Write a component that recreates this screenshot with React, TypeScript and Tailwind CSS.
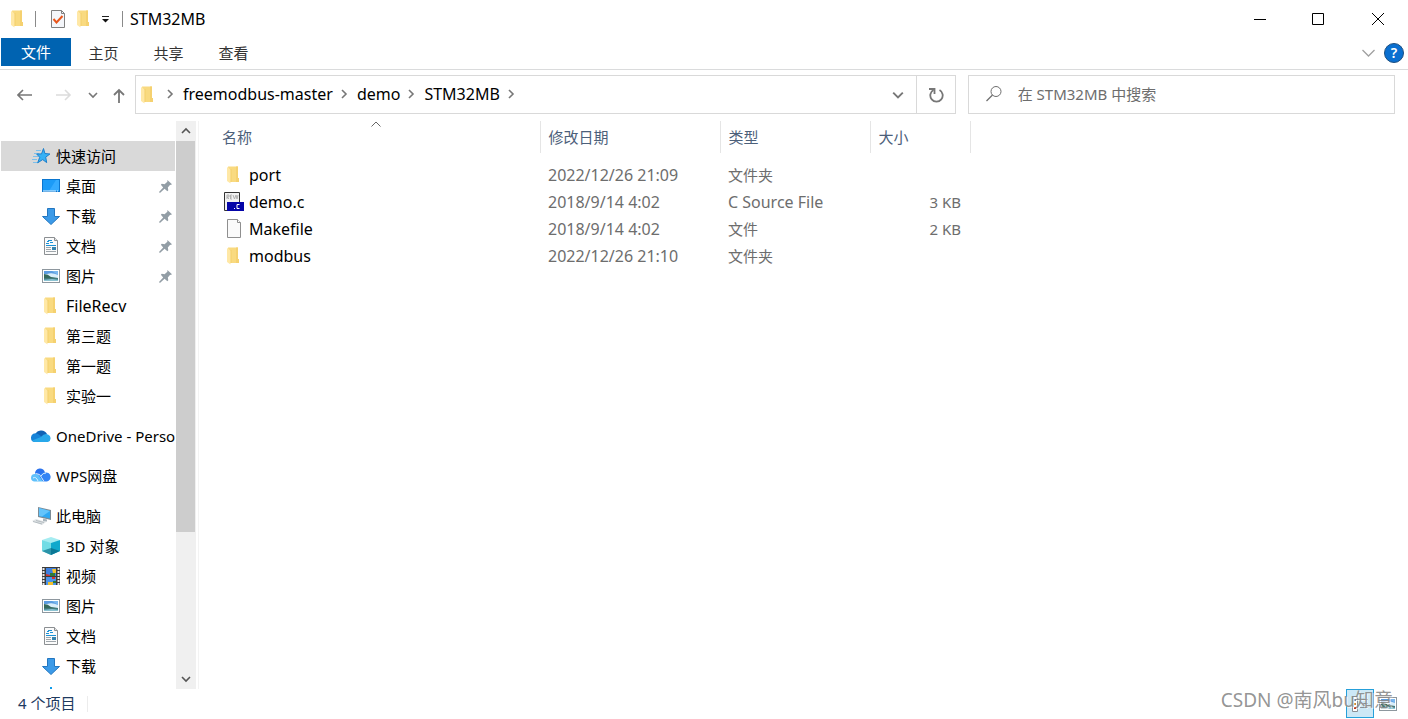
import React, { useState } from "react";

type IconName =
  | "star"
  | "desktop"
  | "download"
  | "document"
  | "picture"
  | "folder"
  | "onedrive"
  | "wps"
  | "pc"
  | "cube"
  | "video"
  | "music";

interface NavItem {
  label: string;
  icon: IconName;
  root?: boolean;
  pinned?: boolean;
}

interface FileItem {
  name: string;
  date: string;
  type: string;
  size?: string;
  icon: "folder" | "csource" | "blank";
}

const navGroups: NavItem[][] = [
  [
    { label: "快速访问", icon: "star", root: true },
    { label: "桌面", icon: "desktop", pinned: true },
    { label: "下载", icon: "download", pinned: true },
    { label: "文档", icon: "document", pinned: true },
    { label: "图片", icon: "picture", pinned: true },
    { label: "FileRecv", icon: "folder" },
    { label: "第三题", icon: "folder" },
    { label: "第一题", icon: "folder" },
    { label: "实验一", icon: "folder" },
  ],
  [{ label: "OneDrive - Personal", icon: "onedrive", root: true }],
  [{ label: "WPS网盘", icon: "wps", root: true }],
  [
    { label: "此电脑", icon: "pc", root: true },
    { label: "3D 对象", icon: "cube" },
    { label: "视频", icon: "video" },
    { label: "图片", icon: "picture" },
    { label: "文档", icon: "document" },
    { label: "下载", icon: "download" },
    { label: "", icon: "music" },
  ],
];

const files: FileItem[] = [
  { name: "port", date: "2022/12/26 21:09", type: "文件夹", icon: "folder" },
  { name: "demo.c", date: "2018/9/14 4:02", type: "C Source File", size: "3 KB", icon: "csource" },
  { name: "Makefile", date: "2018/9/14 4:02", type: "文件", size: "2 KB", icon: "blank" },
  { name: "modbus", date: "2022/12/26 21:10", type: "文件夹", icon: "folder" },
];

const crumbs = ["freemodbus-master", "demo", "STM32MB"];

// latin labels are set one step larger than chinese ones
const isLatin = (text: string) => /^[\x20-\x7e]+$/.test(text);

const FolderIcon = () => (
  <svg width="20" height="20" viewBox="0 0 20 20" aria-hidden="true">
    <path d="M4 1.500h10V13h1v4H6z" fill="#f9da80" />
    <path d="M12 1.500h2V13h1v4h-3z" fill="#f5d170" />
    <path d="M6 4h1.500v13H6z" fill="#f3cf6b" />
    <path d="M3 2l3.500 2.500v14L3 16z" fill="#ffe8a6" />
  </svg>
);

const PictureIcon = () => (
  <svg width="20" height="20" viewBox="0 0 20 20" aria-hidden="true">
    <rect x="1.500" y="3.500" width="17" height="13" fill="#fff" stroke="#8e979e" />
    <rect x="3" y="5" width="14" height="10" fill="#79b7ee" />
    <path d="M3 5h8l6 4v3H3z" fill="#5a9be0" />
    <path d="M6 8q5-2 11 1v3H3V8z" fill="#d8edfa" />
    <path d="M3 8q4 0 7 3l7 1v1H3z" fill="#35695c" />
    <path d="M3 12.500h14V15H3z" fill="#4e8b99" />
    <path d="M3 14l8-1 6 1v1H3z" fill="#8cc3d2" />
  </svg>
);

const NavIcon = ({ name }: { name: IconName }) => {
  if (name === "folder") return <FolderIcon />;
  if (name === "picture") return <PictureIcon />;
  return (
    <svg width="20" height="20" viewBox="0 0 20 20" aria-hidden="true">
      {name === "star" && (
        <>
          <path d="M5 4.500h5M3 7.500h5M2 10.500h5M1 13.500h5M2 16.500h5" stroke="#7cc0ec" />
          <path
            d="M12.500 2.500l1.400 5 5 .5-4.200 3.200 1 5.400-4-3-5 3.200 2-5.500-3-3.300 4.800-.1z"
            fill="#36b1f5"
            stroke="#1c7fcb"
          />
        </>
      )}
      {name === "desktop" && (
        <>
          <rect x="1.500" y="3.500" width="17" height="12" fill="#1c9bf7" stroke="#0b76cf" />
          <path d="M8 15L15 4h3v11z" fill="#35abff" />
          <path d="M2 15h13M16 15h1" stroke="#dff1ff" />
        </>
      )}
      {name === "download" && (
        <path d="M6.500 2.500h7v8h5L10 18.500 1.500 10.500h5z" fill="#3b9ae8" stroke="#2276c0" />
      )}
      {name === "document" && (
        <>
          <path d="M3.500 1.500h10l3 3v14h-13z" fill="#fbfbfb" stroke="#8b8f92" />
          <path d="M13.500 1.500v3h3" fill="#e4e4e4" stroke="#8b8f92" />
          <path d="M7 4.500h4M6 5.500h2M5 7.500h3M9 6.500h3M5 9.500h10" stroke="#1b92d6" />
          <path d="M5 11.500h5M5 13.500h5M5 15.500h10" stroke="#9fa6ab" />
          <rect x="11" y="11" width="4" height="3" fill="#3683ad" />
        </>
      )}
      {name === "onedrive" && (
        <>
          <path d="M4 9a6.500 6.500 0 0 1 12-1l-5 5z" fill="#0f62b5" />
          <path d="M0 12a4.500 4.500 0 0 1 7-4L14 13l-3 3H4a4 4 0 0 1-4-4z" fill="#1683d8" />
          <path d="M10 11q3-4 7-2.500a4 4 0 0 1 0 7.500H4a4 4 0 0 1-3-1.500z" fill="#28a8ea" />
        </>
      )}
      {name === "wps" && (
        <>
          <path d="M4 8a5 5 0 0 1 10-1l-2 4 2 4H9z" fill="#2a73ee" />
          <path d="M3 15.500a3.800 3.800 0 0 1 1-7.500q4 0 5 3l3 4.500z" fill="#60c1fb" />
          <path d="M8 9q3-3 6-2.500a4.600 4.600 0 0 1 2 9h-4z" fill="#3384f5" />
          <path d="M4.500 7.500q5 0 6 4l2.500 4M10 10q2-3.500 5-3M2 12q3-2 5 3" stroke="#dcefff" fill="none" />
        </>
      )}
      {name === "pc" && (
        <>
          <path d="M7 1l13 3v10L7 11z" fill="#7c8b95" />
          <path d="M8 2l11 3v7.500L8 10z" fill="#2fa8f2" />
          <path d="M8 2l11 3-8 5.500L8 10z" fill="#64c4fb" />
          <path d="M12 12.500l4 1v2h-4z" fill="#a9b4bb" />
          <path d="M1 15l4-2 10 3-4 3z" fill="#dfe3e5" />
          <path d="M2 15.500l9 2.500M5 14.500l8 2" stroke="#b4bcc1" />
        </>
      )}
      {name === "cube" && (
        <>
          <path d="M10 1l9 3-9 4-9-4z" fill="#a5ecf1" />
          <path d="M1 4l9 3v12l-9-4z" fill="#71dce5" />
          <path d="M10 7l9-3v11l-9 4z" fill="#0fa9cc" />
          <path d="M1 15l9-3v7z" fill="#2b93a8" />
          <path d="M10 12l9 3-9 4z" fill="#0b7895" />
        </>
      )}
      {name === "video" && (
        <>
          <rect x="1" y="1" width="18" height="18" fill="#3b3b3b" />
          <path d="M2.500 2v17M17.500 2v17" stroke="#e8e8e8" strokeWidth="2" strokeDasharray="2 1" />
          <rect x="5" y="2" width="10" height="8" fill="#3d7fe0" />
          <rect x="5" y="11" width="10" height="8" fill="#4b94ea" />
          <path d="M5 8l4 1v1H5zM11 11h3v2h-3z" fill="#d4332b" />
          <path d="M11 3h4v4h-3zM7 16h5v3H7z" fill="#f2bf2c" />
          <path d="M9 7h5v3H9zM12 15h3v2h-3z" fill="#2e7b35" />
        </>
      )}
      {name === "music" && (
        <>
          <path d="M9 1h2v2l5 4v3l-5-3v8H9z" fill="#0f9bea" />
          <circle cx="8" cy="15" r="3" fill="#0f9bea" />
        </>
      )}
    </svg>
  );
};

const FileIcon = ({ kind }: { kind: FileItem["icon"] }) => {
  if (kind === "folder") return <FolderIcon />;
  if (kind === "blank") {
    return (
      <svg width="20" height="20" viewBox="0 0 20 20" aria-hidden="true">
        <path d="M3.500.500h10l3 3v15h-13z" fill="#fafafa" stroke="#8f8f8f" />
        <path d="M13.500.500v3h3" fill="#fff" stroke="#8f8f8f" />
      </svg>
    );
  }
  return (
    <svg width="20" height="20" viewBox="0 0 20 20" aria-hidden="true">
      <path d="M.5.500h15v18H.5z" fill="#f1f1f1" stroke="#333" />
      <path
        d="M3 7V3h2v2H3l2 2M8 3H6.500v4H8M6.500 5H8M9 3l1.500 4L12 3l1 4 1-4"
        stroke="#b0b0b0"
        fill="none"
      />
      <rect x="3" y="10" width="17" height="9" fill="#0505a8" />
      <path d="M15.500 12.500H13v4h2.500M10 16.500h1" stroke="#fff" fill="none" />
    </svg>
  );
};

const PinIcon = () => (
  <svg width="13" height="13" viewBox="0 0 14 14" aria-hidden="true">
    <path
      d="M9 0l5 4.500-1.500 1L12 5 9.500 8l.5 3-1 1-3-2.500L1 14l-1-1 4.500-5L2 5l1-1 3 .5L9 2z"
      fill="#929da5"
    />
  </svg>
);

const Chevron = ({ d, size = 10, color = "#777" }: { d: string; size?: number; color?: string }) => (
  <svg width={size} height={size} viewBox="0 0 10 10" fill="none" stroke={color} strokeWidth="1.600" aria-hidden="true">
    <path d={d} />
  </svg>
);

const TitleBar = () => (
  <header className="flex h-[38px] shrink-0 items-center">
    <div className="flex flex-1 items-center pl-2">
      <FolderIcon />
      <span className="ml-[7px] h-4 w-px bg-[#8a8a8a]" />
      <button aria-label="属性" className="ml-3">
        <svg width="20" height="20" viewBox="0 0 20 20" fill="none">
          <path d="M3.500 1.500h10l3 3v14h-13z" fill="#f4f6fa" stroke="#808080" />
          <path d="M13.500 1.500v3h3" stroke="#808080" />
          <path d="M5.500 10l3 3.500 6-6.500" stroke="#e8561c" strokeWidth="2" />
        </svg>
      </button>
      <button aria-label="新建文件夹" className="ml-[6px]">
        <FolderIcon />
      </button>
      <button aria-label="自定义快速访问工具栏" className="ml-[7px]">
        <svg width="9" height="8" viewBox="0 0 9 8">
          <path d="M1 1.500h7" stroke="#222" />
          <path d="M1 4h7L4.500 7.500z" fill="#111" />
        </svg>
      </button>
      <span className="ml-3 h-4 w-px bg-[#8a8a8a]" />
      <h1 className="ml-[7px] text-base leading-5 text-black">STM32MB</h1>
    </div>
    <button aria-label="最小化" className="flex h-full w-[58px] items-center justify-center">
      <svg width="12" height="13" viewBox="0 0 12 13">
        <path d="M0 6.500h12" stroke="#000" />
      </svg>
    </button>
    <button aria-label="最大化" className="flex h-full w-[58px] items-center justify-center">
      <svg width="12" height="12" viewBox="0 0 12 12">
        <path d="M.5.500h11v11H.5z" stroke="#000" fill="none" />
      </svg>
    </button>
    <button aria-label="关闭" className="flex h-full w-[61px] items-center justify-center">
      <svg width="12" height="12" viewBox="0 0 12 12">
        <path d="M0 0l12 12M12 0L0 12" stroke="#000" />
      </svg>
    </button>
  </header>
);

const Ribbon = () => (
  <div className="flex h-8 shrink-0 items-start border-b border-[#dadbdc] pl-px">
    <button className="h-7 w-[70px] bg-[#0063b1] text-white">文件</button>
    {["主页", "共享", "查看"].map((tab) => (
      <button key={tab} className="h-[30px] w-[65px] text-[#333]">
        {tab}
      </button>
    ))}
    <div className="ml-auto flex h-[30px] items-center gap-[9px] pr-1">
      <button aria-label="展开功能区">
        <svg width="13" height="8" viewBox="0 0 13 8" fill="none" stroke="#a0a0a0" strokeWidth="1.300">
          <path d="M.5 1l6 6 6-6" />
        </svg>
      </button>
      <button
        aria-label="帮助"
        className="flex h-5 w-5 items-center justify-center rounded-full border border-[#1d4f80] bg-[#0a6fd0] text-sm font-semibold leading-none text-white"
      >
        ?
      </button>
    </div>
  </div>
);

const AddressRow = () => {
  const [query, setQuery] = useState("");

  return (
    <div className="flex h-[50px] shrink-0 items-start pt-[5px] pr-[13px]">
      <div className="flex h-[39px] w-[135px] items-center pl-[17px]">
        <button aria-label="后退">
          <svg width="16" height="14" viewBox="0 0 16 14" fill="none" stroke="#777" strokeWidth="1.600">
            <path d="M15 7H1M6 2L1 7l5 5" />
          </svg>
        </button>
        <button aria-label="前进" className="ml-[23px]">
          <svg width="16" height="14" viewBox="0 0 16 14" fill="none" stroke="#dcdcdc" strokeWidth="1.600">
            <path d="M0 7h14M9 2l5 5-5 5" />
          </svg>
        </button>
        <button aria-label="最近浏览的位置" className="ml-4">
          <Chevron d="M1 3l4 4 4-4" />
        </button>
        <button aria-label="上移" className="ml-[14px]">
          <svg width="14" height="16" viewBox="0 0 14 16" fill="none" stroke="#777" strokeWidth="1.800">
            <path d="M7 16V3M2 8l5-5 5 5" />
          </svg>
        </button>
      </div>
      <nav aria-label="地址" className="flex h-[39px] flex-2 items-center border border-[#d9d9d9] pl-[2px]">
        <FolderIcon />
        <ol className="flex items-center pb-[2px] pl-[7px]">
          <li className="flex w-[10px]">
            <Chevron d="M3 1l4 4-4 4" />
          </li>
          {crumbs.map((crumb) => (
            <li key={crumb} className="flex items-center">
              <button className="pr-[6px] pl-2 text-base leading-5 text-black">{crumb}</button>
              <Chevron d="M3 1l4 4-4 4" />
            </li>
          ))}
        </ol>
        <button aria-label="以前的位置" className="ml-auto px-3">
          <Chevron d="M1 3l4 4 4-4" size={12} />
        </button>
        <button
          aria-label="刷新"
          className="flex h-full w-[39px] items-center justify-center border-l border-[#d9d9d9]"
        >
          <svg width="16" height="16" viewBox="0 0 16 16" fill="none" stroke="#777" strokeWidth="1.800">
            <path d="M11.500 3A6.200 6.200 0 1 1 5.500 3" />
            <path d="M1 2h5.500v5" />
          </svg>
        </button>
      </nav>
      <label className="ml-3 flex h-[39px] flex-1 items-center border border-[#d9d9d9] pb-px pl-[17px]">
        <svg width="16" height="16" viewBox="0 0 16 16" fill="none" stroke="#6e6e6e" aria-hidden="true">
          <circle cx="10" cy="5.500" r="5" />
          <path d="M6.500 9L.5 15" strokeWidth="1.200" />
        </svg>
        <input
          aria-label="搜索"
          type="text"
          value={query}
          onChange={(e) => setQuery(e.target.value)}
          placeholder="在 STM32MB 中搜索"
          className="ml-4 min-w-0 flex-1 outline-none placeholder:text-[#6d6d6d]"
        />
      </label>
    </div>
  );
};

const Sidebar = () => (
  <aside className="mt-px flex w-[199px] shrink-0 border-r border-[#f3f3f3]">
    <nav aria-label="导航窗格" className="ml-px flex w-[174px] flex-col gap-[10px] overflow-hidden pt-5">
      {navGroups.map((group, i) => (
        <ul key={i} className="shrink-0">
          {group.map((item) => (
            <li key={item.icon + item.label}>
              <button
                aria-label={item.label || "音乐"}
                className={`flex h-[30px] w-full items-center gap-[5px] text-left whitespace-nowrap text-black ${
                  item.root ? "pl-[30px]" : "pl-10"
                } ${item.icon === "star" ? "bg-[#d9d9d9]" : ""} ${
                  isLatin(item.label) && !item.root ? "text-base leading-5" : ""
                }`}
              >
                <span className="shrink-0">
                  <NavIcon name={item.icon} />
                </span>
                <span>{item.label}</span>
                {item.pinned && (
                  <span className="mr-[3px] ml-auto">
                    <PinIcon />
                  </span>
                )}
              </button>
            </li>
          ))}
        </ul>
      ))}
    </nav>
    <div className="ml-px flex w-5 flex-col bg-[#f0f0f0]">
      <button aria-label="向上滚动" className="flex h-5 shrink-0 items-center justify-center">
        <Chevron d="M1 7l4-4 4 4" color="#555" />
      </button>
      <div className="flex-1">
        <div className="mr-px h-[74%] bg-[#cdcdcd]" />
      </div>
      <button aria-label="向下滚动" className="flex h-5 shrink-0 items-center justify-center">
        <Chevron d="M1 3l4 4 4-4" color="#555" />
      </button>
    </div>
  </aside>
);

const FileTable = () => (
  <main className="min-w-0 flex-1 overflow-hidden pt-px pl-[14px]">
    <table className="w-[757px] table-fixed border-collapse text-left">
      <colgroup>
        <col className="w-[327px]" />
        <col className="w-[180px]" />
        <col className="w-[150px]" />
        <col className="w-[100px]" />
      </colgroup>
      <thead>
        <tr className="h-8 text-[#4c607a]">
          <th className="relative border-r border-[#e5e5e5] p-0 pl-[9px] font-normal">
            名称
            <svg
              className="absolute top-0 left-1/2 -translate-x-1/2"
              width="10"
              height="6"
              viewBox="0 0 10 6"
              fill="none"
              stroke="#666"
              aria-hidden="true"
            >
              <path d="M.5 5.500L5 1l4.500 4.500" />
            </svg>
          </th>
          <th className="border-r border-[#e5e5e5] p-0 pl-2 font-normal">修改日期</th>
          <th className="border-r border-[#e5e5e5] p-0 pl-2 font-normal">类型</th>
          <th className="border-r border-[#e5e5e5] p-0 pl-2 font-normal">大小</th>
        </tr>
      </thead>
      <tbody className="text-[#6d6d6d] before:block before:h-2">
        {files.map((file) => (
          <tr key={file.name} className="h-[27px]">
            <td className="p-0 pl-[11px]">
              <button className="flex items-center gap-[5px] text-base leading-5 text-black">
                <FileIcon kind={file.icon} />
                {file.name}
              </button>
            </td>
            <td className="p-0 pl-2 text-base leading-5">{file.date}</td>
            <td className={`p-0 pl-2 ${isLatin(file.type) ? "text-base leading-5" : ""}`}>{file.type}</td>
            <td className="p-0 pr-[9px] text-right">{file.size}</td>
          </tr>
        ))}
      </tbody>
    </table>
  </main>
);

const StatusBar = () => (
  <footer className="relative flex h-[30px] shrink-0 items-start pr-[10px] pl-[18px] text-[#1e3a5f]">
    <span className="flex h-7 items-center">4 个项目</span>
    <span className="mt-[7px] ml-3 h-4 w-px bg-[#ececec]" />
    <div className="ml-auto flex h-[29px] items-center gap-1">
      <button
        aria-label="详细信息"
        className="flex h-full w-7 items-center justify-center border border-[#26a0da] bg-[#cce8f6]"
      >
        <svg width="18" height="16" viewBox="0 0 18 16" aria-hidden="true">
          <path d="M1.500.500h5v15h-5z" fill="#fff" stroke="#8a8f94" />
          <path d="M3 3h2v2H3z" fill="#5e8ab4" />
          <path d="M3 7h2v2H3z" fill="#c68a3c" />
          <path d="M3 11h2v2H3z" fill="#b53a22" />
          <path d="M9 3.500h8M9 7.500h8M9 11.500h8" stroke="#8a8f94" />
        </svg>
      </button>
      <button aria-label="大图标">
        <PictureIcon />
      </button>
    </div>
    <span className="pointer-events-none absolute right-[15px] -top-px text-[19px] leading-6 text-[#888]/90 [text-shadow:1px_1px_0_#ffffffb0]">
      CSDN @南风bu知意
    </span>
  </footer>
);

const App: React.FC = () => {
  return (
    <div className="flex h-screen flex-col overflow-hidden bg-white font-['Noto_Sans','Noto_Sans_CJK_SC',sans-serif] text-[15px] leading-5">
      <TitleBar />
      <Ribbon />
      <AddressRow />
      <div className="flex min-h-0 flex-1">
        <Sidebar />
        <FileTable />
      </div>
      <StatusBar />
    </div>
  );
};

export default App;
